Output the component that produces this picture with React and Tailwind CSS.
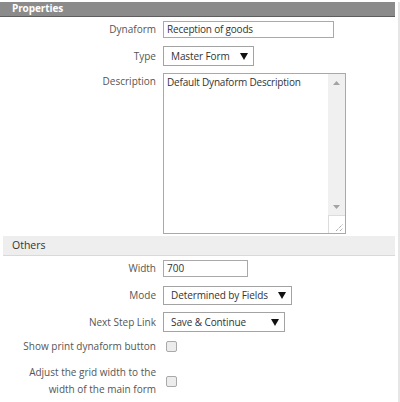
const font = { fontFamily: '"Open Sans", "Liberation Sans", sans-serif' }

function Caret() {
  return (
    <svg width="8" height="7" viewBox="0 0 8 7" className="shrink-0">
      <path d="M0 0 H8 L4 7 Z" fill="#111" />
    </svg>
  )
}

function Label({ children, className = '' }) {
  return (
    <div className={`w-[156px] shrink-0 text-right text-[10px] text-[#555] ${className}`}>{children}</div>
  )
}

function Select({ value, width, height }) {
  return (
    <div
      className={`ml-[7px] flex items-center justify-between whitespace-nowrap border border-[#a3a3a3] bg-white pl-[7px] pr-[5px] text-[10px] tracking-[-0.1px] text-[#333] ${width} ${height}`}
    >
      <span>{value}</span>
      <Caret />
    </div>
  )
}

function Checkbox() {
  return <div className="ml-[10px] h-[11px] w-[11px] rounded-[2px] border border-[#a9a9a9] bg-[#ececec]" />
}

export default function App() {
  return (
    <div style={font} className="relative flex h-[402px] w-[400px] overflow-hidden bg-white">
      <div className="w-[395px] shrink-0">
        <div className="mt-[2px] h-[15px] border-b border-[#5e5e5e] bg-[#8b8b8b] pl-[12px]">
          <div className="text-[10px] font-bold leading-[12px] tracking-[-0.1px] text-white">Properties</div>
        </div>

        <div className="mt-[4px] flex items-center">
          <Label>Dynaform</Label>
          <div className="ml-[7px] flex h-[17px] w-[171px] items-center border border-[#a9a9a9] px-[3px] text-[10px] tracking-[-0.2px] text-[#333]">
            Reception of goods
          </div>
        </div>

        <div className="mt-[8px] flex items-center">
          <Label>Type</Label>
          <Select value="Master Form" width="w-[91px]" height="h-[20px]" />
        </div>

        <div className="mt-[7px] flex items-start">
          <Label className="leading-[16px]">Description</Label>
          <div className="ml-[7px] flex h-[161px] w-[183px] border border-[#a9a9a9]">
            <div className="flex-1 px-[3px] text-[10px] leading-[16px] tracking-[-0.2px] text-[#333]">Default Dynaform Description</div>
            <div className="flex w-[17px] flex-col bg-[#f0f0f0]">
              <div className="flex h-[17px] items-center justify-center">
                <svg width="7" height="4" viewBox="0 0 7 4"><path d="M3.5 0 L7 4 H0 Z" fill="#a3a3a3" /></svg>
              </div>
              <div className="flex-1" />
              <div className="flex h-[17px] items-center justify-center">
                <svg width="7" height="4" viewBox="0 0 7 4"><path d="M0 0 H7 L3.5 4 Z" fill="#a3a3a3" /></svg>
              </div>
              <div className="flex h-[18px] items-end justify-end border-l border-t border-[#dcdcdc] bg-white pb-[1px] pr-[1px]">
                <svg width="9" height="9" viewBox="0 0 9 9">
                  <path d="M1 8 L8 1 M5 8 L8 5" stroke="#888" strokeWidth="1" strokeDasharray="1 1" />
                </svg>
              </div>
            </div>
          </div>
        </div>

        <div className="ml-[3px] mt-[2px] flex h-[20px] items-center border-b border-[#d9d9d9] bg-[#eeeeee] pl-[9px] text-[10.5px] text-[#333]">
          Others
        </div>

        <div className="mt-[4px] flex items-center">
          <Label>Width</Label>
          <div className="ml-[7px] flex h-[17px] w-[85px] items-center border border-[#a9a9a9] px-[3px] text-[10px] text-[#333]">
            700
          </div>
        </div>

        <div className="mt-[9px] flex items-center">
          <Label>Mode</Label>
          <Select value="Determined by Fields" width="w-[129px]" height="h-[19px]" />
        </div>

        <div className="mt-[7px] flex items-center">
          <Label>Next Step Link</Label>
          <Select value="Save & Continue" width="w-[122px]" height="h-[20px]" />
        </div>

        <div className="mt-[6px] flex items-center">
          <Label className="leading-[17px]">Show print dynaform button</Label>
          <Checkbox />
        </div>

        <div className="mt-[9px] flex items-center">
          <Label className="leading-[17px]">
            Adjust the grid width to the
            <br />
            width of the main form
          </Label>
          <Checkbox />
        </div>
      </div>
      <div className="ml-[3px] mt-[2px] w-[2px] bg-[#e6e6e6]" />
    </div>
  )
}
